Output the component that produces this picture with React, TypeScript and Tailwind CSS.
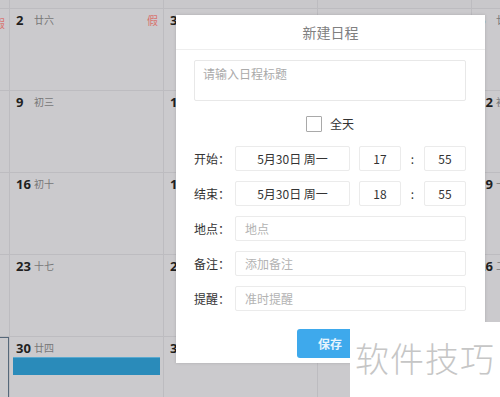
import React from "react";

type CellData = { d?: number | string; l?: string; holiday?: boolean; event?: boolean; today?: boolean };

const rows: CellData[][] = [
  [{ holiday: true }, { d: 2, l: "廿六", holiday: true }, { d: 3, l: "廿七" }, { d: 4, l: "廿八" }, { d: 5, l: "廿九" }],
  [{}, { d: 9, l: "初三" }, { d: 10, l: "初四" }, { d: 11, l: "初五" }, { d: 12, l: "初六" }],
  [{}, { d: 16, l: "初十" }, { d: 17, l: "十一" }, { d: 18, l: "十二" }, { d: 19, l: "十三" }],
  [{}, { d: 23, l: "十七" }, { d: 24, l: "十八" }, { d: 25, l: "十九" }, { d: 26, l: "二十" }],
  [{ today: true }, { d: 30, l: "廿四", event: true }, { d: 31, l: "廿五" }, { d: 1, l: "廿六" }, { d: 2, l: "廿七" }],
];

const font = { fontFamily: '"Noto Sans CJK SC", "Noto Sans", sans-serif' };

function Cell({ c, first }: { c: CellData; first: boolean }) {
  if (first) {
    return (
      <div
        className={
          "bg-[#cbcacd] overflow-hidden flex justify-end pr-[4px] pt-[5px] " +
          (c.today ? "border-t border-r border-[#56687a]" : "")
        }
      >
        {c.holiday && <span className="text-[11px] leading-[18px] text-[#d9736f] whitespace-nowrap">假</span>}
      </div>
    );
  }
  return (
    <div className="bg-[#cbcacd] overflow-hidden flex flex-col px-[3px] pt-[2px]">
      <div className="flex items-center pl-[3px] pr-[2px] h-[18px] whitespace-nowrap">
        <span className="inline-block w-[14px] text-[13px] font-bold text-[#1f1f1f] leading-[18px]" style={{ fontFamily: '"Open Sans", sans-serif' }}>
          {c.d}
        </span>
        <span className="ml-[4px] text-[10px] text-[#777777] leading-[18px]">{c.l}</span>
        <span className="flex-1" />
        {c.holiday && <span className="text-[11px] text-[#d9736f] leading-[18px]">假</span>}
      </div>
      {c.event && <div className="mt-[0px] h-[18px] bg-[#2a8bba] border-t border-[#5aa9cf]" />}
    </div>
  );
}

function Field({ label, children }: { label: string; children: React.ReactNode }) {
  return (
    <div className="flex items-center h-[25px]">
      <div className="w-[41px] text-[12px] text-[#333] whitespace-nowrap">{label}</div>
      {children}
    </div>
  );
}

const box = "h-[25px] border border-[#ebebeb] rounded-[2px] flex items-center text-[12px] text-[#333] bg-white";

export default function App() {
  return (
    <div className="relative w-[500px] h-[397px] overflow-hidden bg-[#bdbcc0]" style={font}>
      <div className="grid grid-cols-[9px_153px_153px_153px_153px] grid-rows-[8px_81px_81px_81px_81px_81px] gap-px">
        {[0, 1, 2, 3, 4].map((i) => (
          <div key={"h" + i} className="bg-[#c9c8cb]" />
        ))}
        {rows.map((r, ri) => r.map((c, ci) => <Cell key={ri + "-" + ci} c={c} first={ci === 0} />))}
      </div>

      {/* dialog */}
      <div className="absolute left-[176px] top-[15px] w-[309px] h-[348px] bg-white shadow-[0_0_3px_rgba(0,0,0,0.15)] flex flex-col">
        <div className="h-[35px] border-b border-[#eeeeee] flex items-center justify-center text-[14px] text-[#808080]">
          新建日程
        </div>
        <div className="flex flex-col pl-[18px] pr-[19px] pt-[10px]">
          <div className="h-[41px] border border-[#e8e8e8] rounded-[2px] px-[8px] pt-[4px] text-[12px] text-[#aaaaaa]">
            请输入日程标题
          </div>
          <div className="flex items-center justify-center mt-[15px] h-[16px]">
            <div className="w-[16px] h-[16px] border border-[#a9a9a9] rounded-[1px]" />
            <span className="ml-[8px] text-[12px] text-[#333]">全天</span>
          </div>
          <div className="flex flex-col gap-[10px] mt-[14px]">
            <Field label="开始：">
              <div className={box + " w-[115px] justify-center"}>5月30日 周一</div>
              <div className={box + " w-[42px] justify-center ml-[9px]"}>17</div>
              <div className="w-[23px] text-center text-[12px] text-[#333]">:</div>
              <div className={box + " w-[42px] justify-center"}>55</div>
            </Field>
            <Field label="结束：">
              <div className={box + " w-[115px] justify-center"}>5月30日 周一</div>
              <div className={box + " w-[42px] justify-center ml-[9px]"}>18</div>
              <div className="w-[23px] text-center text-[12px] text-[#333]">:</div>
              <div className={box + " w-[42px] justify-center"}>55</div>
            </Field>
            <Field label="地点：">
              <div className={box + " flex-1 px-[9px] text-[#b3b3b3]"}>地点</div>
            </Field>
            <Field label="备注：">
              <div className={box + " flex-1 px-[9px] text-[#b3b3b3]"}>添加备注</div>
            </Field>
            <Field label="提醒：">
              <div className={box + " flex-1 px-[9px] text-[#b3b3b3]"}>准时提醒</div>
            </Field>
          </div>
          <div className="flex justify-center mt-[18px]">
            <div className="w-[66px] h-[29px] rounded-[3px] bg-[#3ea9ec] flex items-center justify-center text-[12px] font-bold text-[#e6f4fd]">
              保存
            </div>
          </div>
        </div>
      </div>

      {/* watermark */}
      <div className="absolute left-[350px] top-[322px] w-[150px] h-[75px] bg-white flex items-center justify-center">
        <span className="text-[34px] font-light leading-none text-[#c6c6c6] tracking-[1px] whitespace-nowrap mt-[-4px]">软件技巧</span>
      </div>
    </div>
  );
}
